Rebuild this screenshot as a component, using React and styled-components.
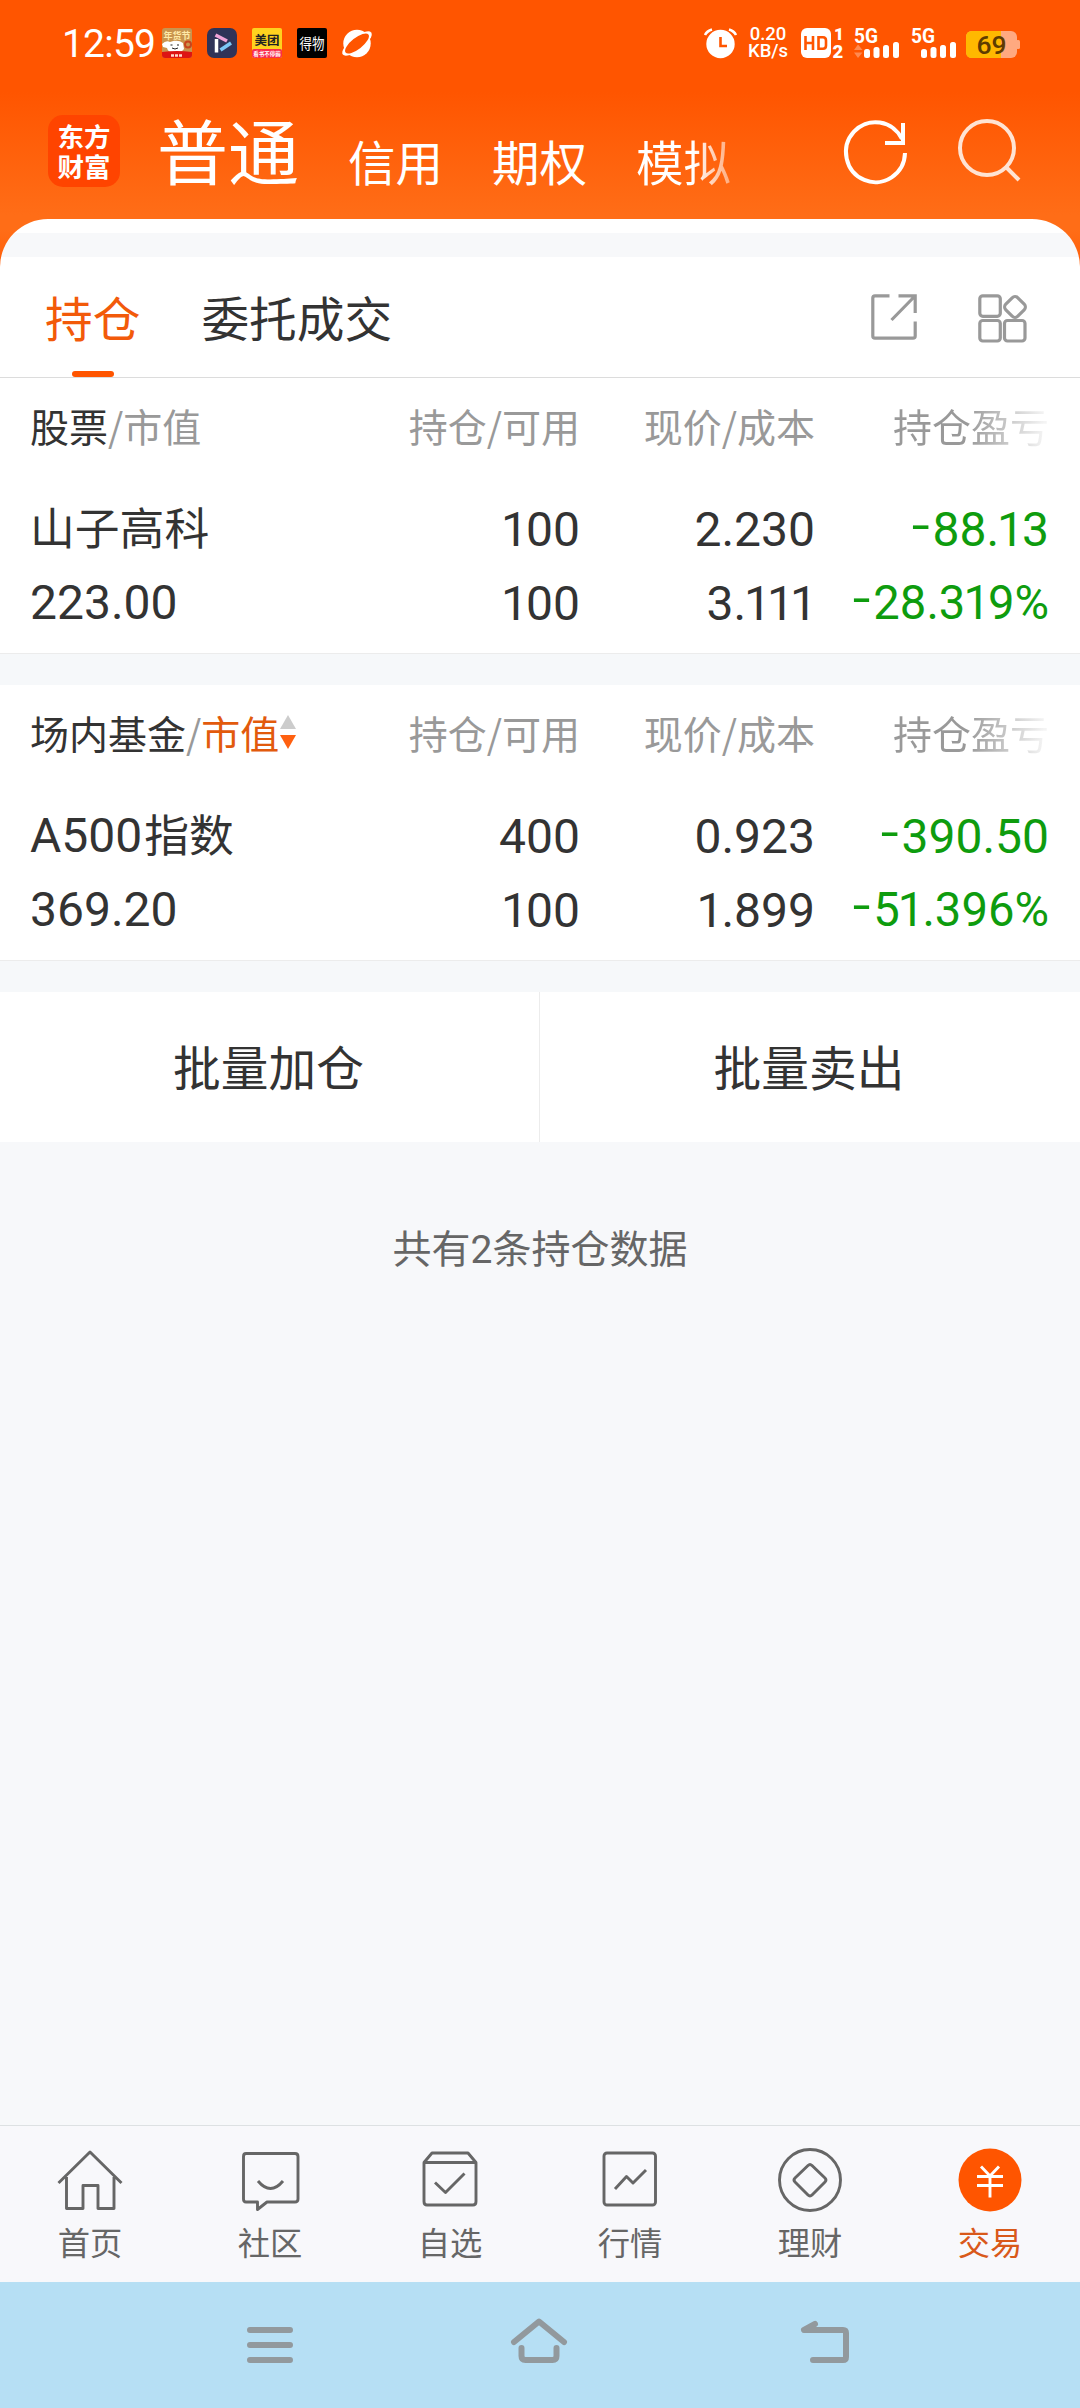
import React from "react";
import styled, { createGlobalStyle, css } from "styled-components";

const Global = createGlobalStyle`
  * { box-sizing: border-box; }
  body { margin: 0; background: #f6f8fa; font-family: Roboto, "Noto Sans CJK SC", sans-serif; }
`;

const Screen = styled.div`
  width: 1080px;
  height: 2408px;
  display: flex;
  flex-direction: column;
  overflow: hidden;
  background: #f7f8fa;
`;

const Hero = styled.header`
  height: 219px;
  flex: none;
`;

const Top = styled.div`
  background: linear-gradient(180deg, #ff5500 0, #ff5500 92px, #ff6d17 215px, #ff6d17 230px, #ff5a05 275px);
`;

const StatusBar = styled.div`
  height: 87px;
  padding: 1px 60px 0 62px;
  display: flex;
  align-items: center;
  color: #fff;
`;

const Clock = styled.span`
  width: 100px;
  font-size: 39px;
  line-height: 44px;
  letter-spacing: -0.8px;
  white-space: nowrap;
`;

const AppIcons = styled.div`
  display: flex;
  gap: 15px;
  margin-top: -3px;
`;

const Glyph = styled.svg`
  display: block;
  flex: none;
  overflow: visible;
`;

const StatusRight = styled.div`
  margin-left: auto;
  margin-top: -3px;
  display: flex;
  align-items: center;
`;

const Speed = styled.div`
  width: 38px;
  margin: 0 14px 0 12px;
  display: flex;
  flex-direction: column;
  align-items: center;
  font-size: 18.5px;
  font-weight: 500;
  line-height: 17px;
  white-space: nowrap;
`;

const TitleBar = styled.nav`
  height: 132px;
  padding: 28px 60px 0 48px;
  display: flex;
  align-items: flex-start;
  color: #fff;
`;

const Logo = styled.div`
  width: 72px;
  height: 72px;
  border-radius: 15px;
  background: #ff4400;
  display: flex;
  flex-direction: column;
  justify-content: center;
  align-items: center;
  font: 700 26.5px/30px "Noto Sans CJK SC", sans-serif;
`;

const Accounts = styled.div`
  display: flex;
  align-items: baseline;
  margin-left: 37px;
  margin-top: -18px;
  height: 110px;
  width: 640px;
`;

const Account = styled.span`
  font-family: "Noto Sans CJK SC", sans-serif;
  font-size: ${(p) => (p.$active ? 71 : 47.5)}px;
  line-height: ${(p) => (p.$active ? 102 : 104)}px;
  margin-right: 49px;
  padding-top: ${(p) => (p.$active ? 0 : 4)}px;
  transform: translateY(${(p) => (p.$active ? 0 : 1.5)}px);
  white-space: nowrap;
  ${(p) =>
    p.$fade &&
    css`
      color: transparent;
      background: linear-gradient(90deg, #fff 60%, rgba(255, 255, 255, 0.45) 100%);
      background-clip: text;
      -webkit-background-clip: text;
    `}
`;

const HeadActions = styled.div`
  margin-left: auto;
  margin-top: 4px;
  display: flex;
  gap: 51px;
`;

const Sheet = styled.div`
  border-radius: 48px 48px 0 0;
  background: linear-gradient(180deg, #fff 14px, #f7f8fa 14px, #f7f8fa 38px, #fff 38px);
  padding-top: 38px;
`;

const Tabs = styled.div`
  height: 121px;
  padding: 0 53px 0 45px;
  display: flex;
  border-bottom: 1px solid #dcdcdc;
`;

const Tab = styled.div`
  height: 120px;
  margin-right: 61px;
  display: flex;
  flex-direction: column;
  align-items: center;
  justify-content: space-between;
  font: 400 47.7px/119px "Noto Sans CJK SC", sans-serif;
  color: ${(p) => (p.$active ? "#f25a0a" : "#333")};
  &::after {
    content: "";
    display: ${(p) => (p.$active ? "block" : "none")};
    width: 42px;
    height: 6px;
    margin-top: -6px;
    border-radius: 3px;
    background: #ff5500;
  }
`;

const TabActions = styled.div`
  margin-left: auto;
  margin-top: 37px;
  display: flex;
  gap: 61px;
`;

const Holdings = styled.section`
  height: 276px;
  padding: 0 31px 0 30px;
  background: #fff;
  border-bottom: 1px solid #ececec;
`;

const Gap = styled.div`
  height: 31px;
  background: #f6f8fa;
`;

const Row = styled.div`
  display: grid;
  grid-template-columns: 320px 230px 235px 234px;
  align-items: center;
  height: 73px;
`;

const HeadRow = styled(Row)`
  height: 94px;
  margin-bottom: 21px;
  font: 400 39px/60px "Noto Sans CJK SC", sans-serif;
  color: #999;
`;

const Cell = styled.div`
  text-align: right;
  white-space: nowrap;
`;

const First = styled.div`
  display: flex;
  align-items: center;
  white-space: nowrap;
`;

const Faded = styled(Cell)`
  color: transparent;
  background: linear-gradient(90deg, #999 65%, #f4f4f4 98%);
  background-clip: text;
  -webkit-background-clip: text;
`;

const Part = styled.span`
  color: ${(p) => p.$color};
`;

const Num = styled(Cell)`
  font-size: ${(p) => (p.$percent ? 47.2 : 48)}px;
  line-height: 73px;
  color: ${(p) => (p.$down ? "#0e9c0e" : "#333")};
`;

const One = styled.span`
  margin: 0 -2px;
`;

const Minus = styled.span`
  display: inline-block;
  line-height: 1;
  margin-right: 5.5px;
  transform: translateY(-4px) scaleX(1.35);
`;

const Name = styled.div`
  padding-top: ${(p) => (p.$value ? 1 : 0)}px;
  font-size: 44.8px;
  line-height: 73px;
  color: #333;
  white-space: nowrap;
`;

const Latin = styled.span`
  font-size: 48px;
  line-height: 1;
  margin-right: 2px;
`;

const Batch = styled.div`
  height: 150px;
  display: grid;
  grid-template-columns: 540px 540px;
  background: #fff;
`;

const BatchButton = styled.button`
  border: 0;
  border-right: ${(p) => (p.$divided ? "1px solid #ececec" : "0")};
  padding: 0 2px 2px 0;
  background: none;
  color: #333;
  font: 400 47.7px/60px "Noto Sans CJK SC", sans-serif;
`;

const Summary = styled.p`
  flex: 1;
  margin: 0;
  padding-top: 78px;
  text-align: center;
  color: #666;
  font: 400 39px/60px Roboto, "Noto Sans CJK SC", sans-serif;
`;

const TabBar = styled.nav`
  height: 157px;
  border-top: 1px solid #dde1e3;
  background: #f8f8fb;
  display: grid;
  grid-template-columns: repeat(6, 180px);
`;

const TabItem = styled.div`
  padding-top: 22px;
  display: flex;
  flex-direction: column;
  align-items: center;
  color: ${(p) => (p.$active ? "#d9591a" : "#666")};
  font: 400 32.3px/40px "Noto Sans CJK SC", sans-serif;
`;

const TabLabel = styled.span`
  margin-top: 5px;
`;

const SystemNav = styled.div`
  height: 126px;
  background: #b6dff4;
  display: grid;
  grid-template-columns: 264px 290px 48px;
  padding: 34px 0 0 247px;
`;

const Signal = ({ arrows, x }) => (
  <g transform={`translate(${x} 0)`} fill="#fff">
    <text x="0" y="14.5" fontSize="19.5" fontWeight="700" fontFamily="Roboto" textLength="24" lengthAdjust="spacingAndGlyphs">5G</text>
    {arrows && <path d="M0 22l4-5.5 4.500 5.500zM0 24.500h8.500L4 30z" fill="#ff8a50" />}
    <rect x="10" y="21" width="6" height="9" rx="2.500" />
    <rect x="19.500" y="19" width="6" height="11" rx="2.500" />
    <rect x="29" y="17" width="6" height="13" rx="2.500" />
    <rect x="39" y="14" width="6" height="16" rx="2.500" />
  </g>
);

const Figure = ({ value }) =>
  [...value].map((ch, i) => {
    if (ch === "1") return <One key={i}>1</One>;
    if (ch === "-") return <Minus key={i}>-</Minus>;
    return ch;
  });

const HoldingsTable = ({ label, rows }) => (
  <Holdings>
    <HeadRow>
      <First>{label}</First>
      <Cell>持仓/可用</Cell>
      <Cell>现价/成本</Cell>
      <Faded>持仓盈亏</Faded>
    </HeadRow>
    {rows.map((r, i) => (
      <Row key={i}>
        <Name $value={!r.name}>{r.latin ? <Latin>{r.latin}</Latin> : null}{r.name}</Name>
        <Num><Figure value={r.qty} /></Num>
        <Num><Figure value={r.price} /></Num>
        <Num $down $percent={r.pl.endsWith("%")}><Figure value={r.pl} /></Num>
      </Row>
    ))}
  </Holdings>
);

const stocks = [
  { name: "山子高科", qty: "100", price: "2.230", pl: "-88.13" },
  { latin: "223.00", qty: "100", price: "3.111", pl: "-28.319%" },
];
const funds = [
  { latin: "A500", name: "指数", qty: "400", price: "0.923", pl: "-390.50" },
  { latin: "369.20", qty: "100", price: "1.899", pl: "-51.396%" },
];

const tabIcons = [
  ["首页", <path d="M3.500 37L35 6L66.500 37M11.500 31V62.500H28V39.500H43V62.500H59V31" />],
  ["社区", <><path d="M11 7.500H60Q63 7.500 63 10.500V53Q63 56 60 56H32L22.500 63.500V56H11Q8.500 56 8.500 53V10.500Q8.500 7.500 11 7.500Z" /><path d="M23 35Q35.500 50 48 35" /></>],
  ["自选", <><path d="M9 17V55.500Q9 59 12 59H58Q61 59 61 55.500V17M9 16.500L17 7H53L61 16.500Z" /><path d="M20 36.500L30.500 46.500L49.500 27.500" /></>],
  ["行情", <><rect x="9" y="7" width="51.500" height="52" rx="3" /><path d="M20 43L31.500 30.500L38 37L51 24" /></>],
  ["理财", <><circle cx="35" cy="34" r="30.500" /><path d="M33 19.500Q35 17.500 37 19.500L50 32Q52 34 50 36L37 49Q35 51 33 49L20 36Q18 34 20 32Z" /></>],
];

export default function App() {
  return (
    <>
      <Global />
      <Screen>
        <Top>
          <Hero>
            <StatusBar>
              <Clock>12:59</Clock>
              <AppIcons>
                <Glyph width="30" height="30" viewBox="0 0 30 30">
                  <rect width="30" height="30" rx="3" fill="#c9944e" />
                  <text x="15" y="11" fontSize="9" fontWeight="700" textAnchor="middle" fill="#ffe9a8" fontFamily="Noto Sans CJK SC">年货节</text>
                  <path d="M0 16Q4 12 8 14Q16 11 21 15L22 21Q19 25 13 25Q6 25 5 20L1 19Z" fill="#fff" />
                  <circle cx="26" cy="16.500" r="3" fill="none" stroke="#c8431c" strokeWidth="2" />
                  <path d="M8.500 17h2M15 17h2M10 20q3 2 6 0" stroke="#222" fill="none" />
                  <path d="M0 24Q15 22 30 24V27Q30 30 27 30H3Q0 30 0 27Z" fill="#dd1414" />
                  <path d="M9 27.500h12" stroke="#ffd9c9" strokeWidth="2.500" strokeDasharray="3 1" />
                </Glyph>
                <Glyph width="30" height="30" viewBox="0 0 30 30">
                  <rect width="30" height="30" rx="7" fill="#2f3358" />
                  <path d="M9.500 11V24.500" stroke="#fff" strokeWidth="3.500" />
                  <path d="M8.500 7L20 13" stroke="#f0a3d8" strokeWidth="3.500" />
                  <path d="M13.500 22L24 15" stroke="#7cc8f7" strokeWidth="3.500" />
                </Glyph>
                <Glyph width="30" height="30" viewBox="0 0 30 30">
                  <rect width="30" height="30" rx="2" fill="#ffd21e" />
                  <rect y="21" width="30" height="9" rx="2" fill="#fa2d4d" />
                  <text x="15" y="16.500" fontSize="12.500" fontWeight="700" textAnchor="middle" fill="#222" fontFamily="Noto Sans CJK SC">美团</text>
                  <text x="15" y="28" fontSize="5.500" fontWeight="700" textAnchor="middle" fill="#fff" fontFamily="Noto Sans CJK SC">看书不停薅</text>
                </Glyph>
                <Glyph width="30" height="30" viewBox="0 0 30 30">
                  <rect width="30" height="30" rx="2" fill="#000" />
                  <text transform="translate(15 20.500) scale(1 1.15)" fontSize="12.500" textAnchor="middle" fill="#fff" fontFamily="Noto Sans CJK SC">得物</text>
                </Glyph>
                <Glyph width="30" height="30" viewBox="0 0 30 30">
                  <circle cx="15" cy="15.500" r="13.700" fill="#fff" />
                  <ellipse cx="15" cy="15.500" rx="18" ry="6.500" transform="rotate(-38 15 15.500)" fill="#fff" />
                  <ellipse cx="15" cy="15.500" rx="14.500" ry="5.600" transform="rotate(-38 15 15.500)" fill="#ff5500" />
                </Glyph>
              </AppIcons>
              <StatusRight>
                <Glyph width="33" height="30" viewBox="0 0 33 30">
                  <circle cx="16.500" cy="16" r="14.200" fill="#fff" />
                  <path d="M1 7Q3 3 8 1.500M32 7Q30 3 25 1.500" stroke="#fff" strokeWidth="2.600" fill="none" />
                  <path d="M16.500 9V18H23" stroke="#ff5500" strokeWidth="2.600" fill="none" />
                </Glyph>
                <Speed><span>0.20</span><span>KB/s</span></Speed>
                <Glyph width="219" height="30" viewBox="0 0 219 30">
                  <rect x="0" y="0" width="30" height="30" rx="6" fill="#fff" />
                  <path d="M4.500 8V22M12 8V22M4.500 15H12M17.500 9.300H22Q25 9.300 25 12.500V17.500Q25 20.700 22 20.700H17.500Z" stroke="#ff5500" strokeWidth="2.600" fill="none" />
                  <text x="33" y="12" fontSize="17" fontWeight="900" fill="#fff">1</text>
                  <text x="31.500" y="29.500" fontSize="18.500" fontWeight="900" fill="#fff">2</text>
                  <Signal x={53} arrows />
                  <Signal x={110} />
                  <rect x="165" y="3" width="51" height="27" rx="6" fill="#ffa980" />
                  <path d="M171 3H200V30H171Q165 30 165 24V9Q165 3 171 3Z" fill="#ffb800" />
                  <rect x="215" y="12" width="4" height="9" rx="1.500" fill="#ffa980" />
                  <text x="190.500" y="26" fontSize="26.500" fontWeight="500" textAnchor="middle" fill="#5e3b00" fontFamily="Roboto">69</text>
                </Glyph>
              </StatusRight>
            </StatusBar>
            <TitleBar>
              <Logo><span>东方</span><span>财富</span></Logo>
              <Accounts>
                <Account $active>普通</Account>
                <Account>信用</Account>
                <Account>期权</Account>
                <Account $fade>模拟</Account>
              </Accounts>
              <HeadActions>
                <Glyph width="62" height="64" viewBox="0 0 62 64" fill="none" stroke="#fff" strokeWidth="4">
                  <path d="M60 34A29.500 30 0 1 1 57 20" />
                  <path d="M58 4V24H40" />
                </Glyph>
                <Glyph width="62" height="64" viewBox="0 0 62 64" fill="none" stroke="#ffe3d3" strokeWidth="4">
                  <circle cx="29" cy="29" r="27" />
                  <path d="M48 48L61 61" />
                </Glyph>
              </HeadActions>
            </TitleBar>
          </Hero>
          <Sheet>
            <Tabs>
              <Tab $active>持仓</Tab>
              <Tab>委托成交</Tab>
              <TabActions>
                <Glyph width="46" height="46" viewBox="0 0 46 46" fill="none" stroke="#999" strokeWidth="3.200">
                  <path d="M18.500 1.800H4Q1.800 1.800 1.800 4V42Q1.800 44.200 4 44.200H42Q44.200 44.200 44.200 42V27.500M27.500 1.800H44.200V19M44 2L20.500 26" />
                </Glyph>
                <Glyph width="49" height="49" viewBox="0 0 49 49" fill="none" stroke="#999" strokeWidth="3.200">
                  <rect x="1.800" y="1.800" width="20.500" height="20.500" rx="3" />
                  <rect x="1.800" y="26.500" width="20.500" height="20.500" rx="3" />
                  <rect x="26.500" y="26.500" width="20.500" height="20.500" rx="3" />
                  <rect x="28.500" y="4.500" width="17" height="17" rx="4" transform="rotate(45 37 13)" />
                </Glyph>
              </TabActions>
            </Tabs>
          </Sheet>
        </Top>
        <HoldingsTable label={<><Part $color="#333">股票</Part><Part $color="#999">/市值</Part></>} rows={stocks} />
        <Gap />
        <HoldingsTable
          label={
            <>
              <Part $color="#333">场内基金</Part>
              <Part $color="#999">/</Part>
              <Part $color="#e25a0c">市值</Part>
              <Glyph width="18" height="34" viewBox="0 0 18 34">
                <path d="M1 14L9 0L17 14Z" fill="#ccc" />
                <path d="M1 20H17L9 34Z" fill="#ff6010" />
              </Glyph>
            </>
          }
          rows={funds}
        />
        <Gap />
        <Batch>
          <BatchButton $divided>批量加仓</BatchButton>
          <BatchButton>批量卖出</BatchButton>
        </Batch>
        <Summary>共有2条持仓数据</Summary>
        <TabBar>
          {tabIcons.map(([label, art]) => (
            <TabItem key={label}>
              <Glyph width="71" height="68" viewBox="0 2 71 68" fill="none" stroke="#666" strokeWidth="2.900" strokeLinejoin="round">{art}</Glyph>
              <TabLabel>{label}</TabLabel>
            </TabItem>
          ))}
          <TabItem $active>
            <Glyph width="71" height="68" viewBox="0 2 71 68" fill="none" stroke="#fff" strokeWidth="2.900">
              <circle cx="35" cy="34" r="31.500" fill="#ff5500" stroke="none" />
              <path d="M26 20.500L35 30L44 20.500M22 30.500H48M22 39.500H48M35 30V51.500" />
            </Glyph>
            <TabLabel>交易</TabLabel>
          </TabItem>
        </TabBar>
        <SystemNav>
          <Glyph width="46" height="50" viewBox="0 0 46 50" fill="none" stroke="#92999d" strokeWidth="6" strokeLinecap="round">
            <path d="M3 14H43M3 29H43M3 44H43" />
          </Glyph>
          <Glyph width="56" height="50" viewBox="0 0 56 50" fill="none" stroke="#92999d" strokeWidth="6" strokeLinecap="round" strokeLinejoin="round">
            <path d="M3 26L28 5.500L53 26M10.500 32V40Q10.500 44 14.500 44H41.500Q45.500 44 45.500 40V32" />
          </Glyph>
          <Glyph width="48" height="50" viewBox="0 0 48 50" fill="none" stroke="#92999d" strokeWidth="6" strokeLinecap="round" strokeLinejoin="round">
            <path d="M14 8L3 14H42Q45 14 45 17V41Q45 44 42 44H12" />
          </Glyph>
        </SystemNav>
      </Screen>
    </>
  );
}
